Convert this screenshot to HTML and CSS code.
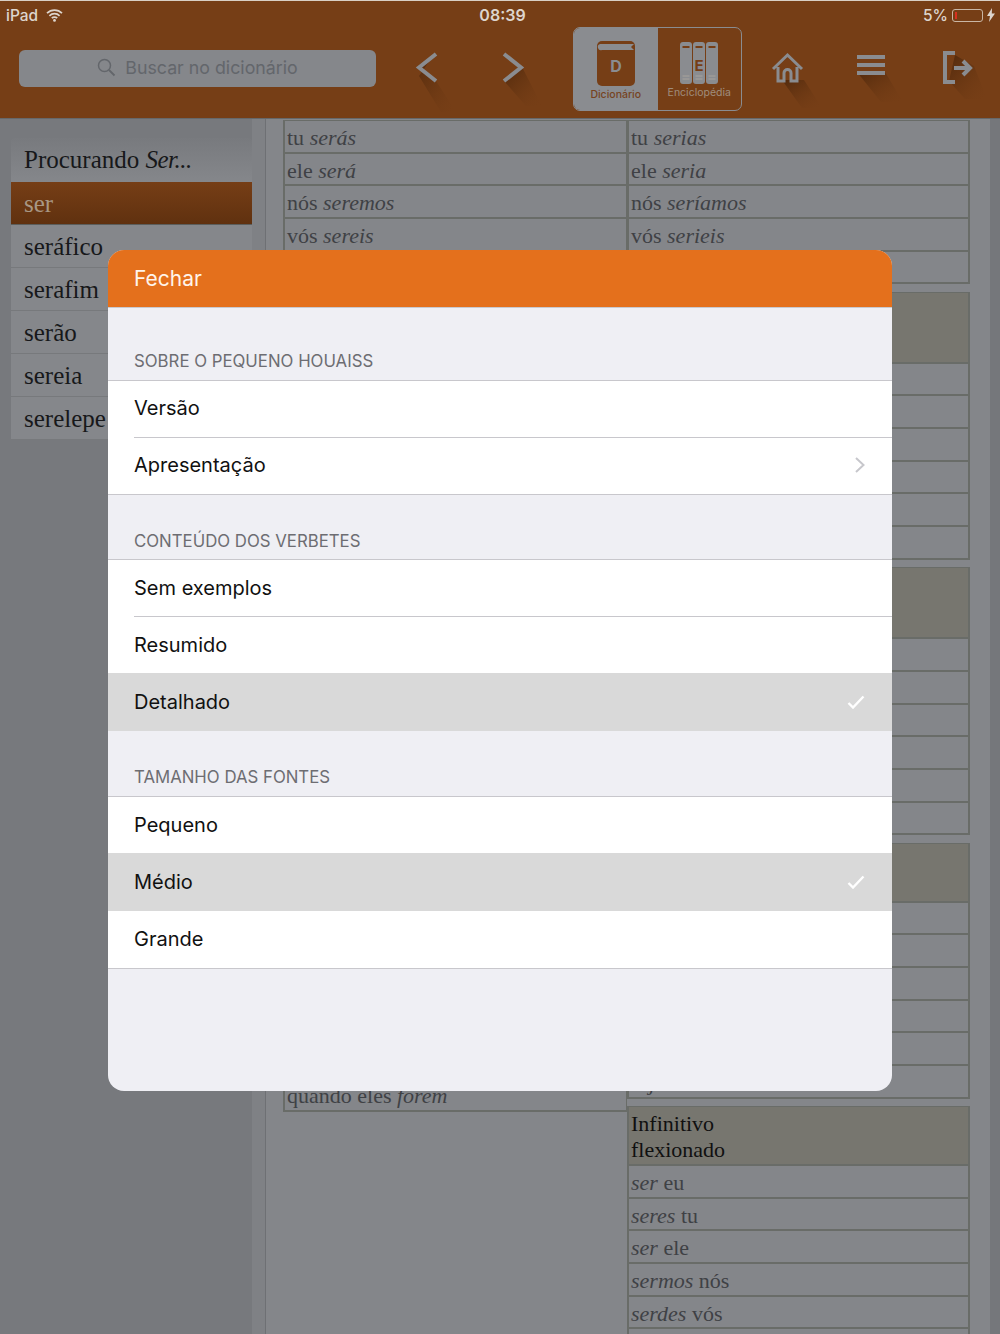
FILE: index.html
```html
<!DOCTYPE html>
<html lang="pt">
<head>
<meta charset="utf-8">
<title>Pequeno Houaiss</title>
<link rel="stylesheet" href="styles.css">
</head>
<body>
<div class="app">
  <svg class="defs" width="0" height="0" aria-hidden="true">
    <defs>
      <linearGradient id="sh" x1="0" y1="0" x2="1" y2="1">
        <stop offset="0" stop-color="#4f280c" stop-opacity=".95"/>
        <stop offset="1" stop-color="#763e16" stop-opacity="0"/>
      </linearGradient>
    </defs>
  </svg>
  <header class="top">
    <div class="status">
      <div class="st-left">
        <span>iPad</span>
        <svg class="wifi" width="17" height="13" viewBox="0 0 17 13"><path d="M1 4.200a10.600 10.600 0 0 1 15 0M3.400 6.800a7.200 7.200 0 0 1 10.200 0M5.800 9.200a3.800 3.800 0 0 1 5.400 0" fill="none" stroke="#ddd5cd" stroke-width="1.700"/><circle cx="8.500" cy="11.400" r="1.400" fill="#ddd5cd"/></svg>
      </div>
      <div class="st-time">08:39</div>
      <div class="st-right">
        <span>5%</span>
        <span class="batt"><span class="batt-level"></span></span>
        <svg width="8" height="14" viewBox="0 0 8 14"><path d="M5 0 0 8h3l-1 6 6-8.500H4.800z" fill="#ddd5cd"/></svg>
      </div>
    </div>
    <nav class="nav">
      <div class="search">
        <svg width="19" height="19" viewBox="0 0 19 19"><circle cx="7.500" cy="7.500" r="6" fill="none" stroke="#63666b" stroke-width="1.500"/><path d="m12 12 5.500 5.500" stroke="#63666b" stroke-width="1.800"/></svg>
        <span>Buscar no dicionário</span>
      </div>
      <svg class="ic ic-back" width="50" height="60" viewBox="0 0 50 60"><path d="M24 3 8 17.500 25 31l20 31H30L8 26z" fill="url(#sh)"/><path d="M25 4 8 17.500 25 31" fill="none" stroke="#8a8c90" stroke-width="4"/></svg>
      <svg class="ic ic-next" width="50" height="60" viewBox="0 0 50 60"><path d="M8 31 26 17 46 56 H30z" fill="url(#sh)"/><path d="M8 4l17 13.500L8 31" fill="none" stroke="#8a8c90" stroke-width="4"/></svg>
      <div class="seg">
        <div class="seg-item seg-on">
          <svg width="40" height="46" viewBox="0 0 40 46"><rect x="1" y="1" width="38" height="45" rx="5" fill="#763e16"/><path d="M4 4h34l-3 3 3 3H6a3 3 0 0 1-2-6z" fill="#8a8c90"/><text x="20" y="32" class="book-letter">D</text></svg>
          <span class="seg-label seg-label-on">Dicionário</span>
        </div>
        <div class="seg-item">
          <svg width="40" height="43" viewBox="0 0 40 43">
            <rect x="1" y="0" width="12" height="42" rx="3" fill="#8a8c90"/><rect x="14" y="0" width="12" height="42" rx="3" fill="#8a8c90"/><rect x="27" y="0" width="12" height="42" rx="3" fill="#8a8c90"/>
            <path d="M3.500 5h7M16.500 5h7M29.500 5h7" stroke="#763e16" stroke-width="2"/>
            <path d="M3.500 34h7M3.500 37h7M16.500 34h7M16.500 37h7M29.500 34h7M29.500 37h7" stroke="#a8a39c" stroke-width="1"/>
            <text x="20" y="29" class="book-letter small">E</text>
          </svg>
          <span class="seg-label">Enciclopédia</span>
        </div>
      </div>
      <svg class="ic ic-home" width="50" height="60" viewBox="0 0 50 60"><path d="M12 30h22l18 28H32z" fill="url(#sh)"/><path d="M3 19 17.500 5 32 19M8 17v14h6v-8a3.500 3.500 0 0 1 7 0v8h6V17" fill="none" stroke="#8a8c90" stroke-width="3"/></svg>
      <svg class="ic ic-menu" width="50" height="60" viewBox="0 0 50 60"><path d="M2 24h28l18 30H26z" fill="url(#sh)"/><path d="M2 9h28M2 17h28M2 25h28" stroke="#8a8c90" stroke-width="4"/></svg>
      <svg class="ic ic-exit" width="50" height="60" viewBox="0 0 50 60"><path d="M14 6 33 17 46 50H24L8 32z" fill="url(#sh)"/><path d="M14 4H4v29h10" fill="none" stroke="#8a8c90" stroke-width="4"/><path d="M13 19h16M22 12l7 7-7 7" fill="none" stroke="#8a8c90" stroke-width="4"/></svg>
    </nav>
  </header>

  <main class="body">
    <aside class="side">
      <div class="side-card">
        <div class="side-head">Procurando <i>Ser...</i></div>
        <div class="side-row side-sel">ser</div>
        <div class="side-row">seráfico</div>
        <div class="side-row">serafim</div>
        <div class="side-row">serão</div>
        <div class="side-row">sereia</div>
        <div class="side-row">serelepe</div>
      </div>
    </aside>
    <div class="strip"></div>
    <section class="content">
      <div class="col">
        <div class="tb">
          <div class="r">tu <i>serás</i></div>
          <div class="r">ele <i>será</i></div>
          <div class="r">nós <i>seremos</i></div>
          <div class="r">vós <i>sereis</i></div>
          <div class="r"></div>
        </div>
        <div class="tb">
          <div class="th th3"></div>
          <div class="r"></div><div class="r"></div><div class="r"></div><div class="r"></div><div class="r"></div><div class="r"></div>
        </div>
        <div class="tb">
          <div class="th th3"></div>
          <div class="r"></div><div class="r"></div><div class="r"></div><div class="r"></div><div class="r"></div><div class="r"></div>
        </div>
        <div class="tb">
          <div class="th th4"></div>
          <div class="r"></div><div class="r"></div><div class="r"></div><div class="r"></div><div class="r"></div>
          <div class="r">quando eles <i>forem</i></div>
        </div>
      </div>
      <div class="col">
        <div class="tb">
          <div class="r">tu <i>serias</i></div>
          <div class="r">ele <i>seria</i></div>
          <div class="r">nós <i>seríamos</i></div>
          <div class="r">vós <i>serieis</i></div>
          <div class="r"></div>
        </div>
        <div class="tb">
          <div class="th th3"></div>
          <div class="r"></div><div class="r"></div><div class="r"></div><div class="r"></div><div class="r"></div><div class="r"></div>
        </div>
        <div class="tb">
          <div class="th th3"></div>
          <div class="r"></div><div class="r"></div><div class="r"></div><div class="r"></div><div class="r"></div><div class="r"></div>
        </div>
        <div class="tb">
          <div class="th th2"></div>
          <div class="r"></div><div class="r"></div><div class="r"></div><div class="r"></div><div class="r"></div>
          <div class="r"><i>sejam</i></div>
        </div>
        <div class="tb">
          <div class="th th2b">Infinitivo<br>flexionado</div>
          <div class="r"><i>ser</i> eu</div>
          <div class="r"><i>seres</i> tu</div>
          <div class="r"><i>ser</i> ele</div>
          <div class="r"><i>sermos</i> nós</div>
          <div class="r"><i>serdes</i> vós</div>
          <div class="r"></div>
        </div>
      </div>
    </section>
    <div class="edge"></div>
  </main>

  <div class="modal">
    <div class="modal-head">Fechar</div>
    <div class="modal-body">
      <div class="sec sec-1">SOBRE O PEQUENO HOUAISS</div>
      <ul class="group group-1">
        <li class="item">Versão</li>
        <li class="item item-last">Apresentação
          <svg width="10" height="16" viewBox="0 0 10 16"><path d="M1 1l7.500 7L1 15" fill="none" stroke="#c7c7cc" stroke-width="2"/></svg>
        </li>
      </ul>
      <div class="sec">CONTEÚDO DOS VERBETES</div>
      <ul class="group group-open">
        <li class="item">Sem exemplos</li>
        <li class="item item-last">Resumido</li>
        <li class="item item-sel item-last">Detalhado
          <svg width="18" height="14" viewBox="0 0 18 14"><path d="M1.500 8l4.500 4.500L16.500 1.500" fill="none" stroke="#fff" stroke-width="2.400"/></svg>
        </li>
      </ul>
      <div class="sec sec-3">TAMANHO DAS FONTES</div>
      <ul class="group">
        <li class="item item-last">Pequeno</li>
        <li class="item item-sel item-last">Médio
          <svg width="18" height="14" viewBox="0 0 18 14"><path d="M1.500 8l4.500 4.500L16.500 1.500" fill="none" stroke="#fff" stroke-width="2.400"/></svg>
        </li>
        <li class="item item-last">Grande</li>
      </ul>
    </div>
  </div>
</div>
</body>
</html>
```

FILE: styles.css
```css
* { box-sizing: border-box; }
html, body { margin: 0; padding: 0; }
.app {
  position: relative;
  width: 1000px;
  height: 1334px;
  overflow: hidden;
  display: flex;
  flex-direction: column;
  background: #84868a;
  font-family: "Liberation Serif", serif;
}
.defs { position: absolute; }

/* top bar */
.top {
  height: 119px;
  flex: none;
  background: #763e16;
  border-top: 1px solid #d9cfc4;
  border-bottom: 1px solid #66686a;
  display: flex;
  flex-direction: column;
}
.status {
  height: 26px;
  flex: none;
  display: grid;
  grid-template-columns: 1fr auto 1fr;
  align-items: center;
  padding: 2px 5px 0 6px;
  font: 500 15.500px "Inter", sans-serif;
  color: #ddd5cd;
}
.st-left { display: flex; align-items: center; gap: 8px; }
.st-time { font-weight: 600; font-size: 16px; margin-left: 4px; }
.st-right { display: flex; align-items: center; justify-content: flex-end; gap: 4px; }
.batt {
  width: 31px;
  height: 13px;
  border: 1px solid #c9b6a4;
  border-radius: 3px;
  padding: 2px;
  display: block;
}
.batt-level { display: block; width: 2px; height: 100%; background: #d8301f; }

.nav {
  height: 84px;
  flex: none;
  display: flex;
  align-items: center;
  padding-left: 19px;
}
.search {
  width: 357px;
  height: 37px;
  margin-bottom: 2px;
  padding-bottom: 2px;
  background: #85878b;
  border-radius: 6px;
  display: flex;
  align-items: center;
  justify-content: center;
  gap: 9px;
  font: 400 17.800px "Inter", sans-serif;
  color: #63666b;
}
.ic { flex: none; overflow: visible; margin-top: 22px; }
.ic-back { margin-left: 35px; }
.ic-next { margin-left: 35px; }
.seg {
  margin-left: 27px;
  width: 169px;
  height: 84px;
  border: 1px solid #8a8c90;
  border-radius: 7px;
  display: flex;
  overflow: hidden;
  flex: none;
}
.seg-item {
  flex: 1;
  display: flex;
  flex-direction: column;
  align-items: center;
  padding-top: 14px;
  gap: 1px;
}
.seg-on { background: #8a8c90; padding-top: 12px; gap: 2px; }
.seg-label { font: 400 10.500px "Inter", sans-serif; color: #a08d7c; }
.seg-label-on { color: #76431f; font-weight: 500; }
.book-letter {
  font: 700 16px "Inter", sans-serif;
  fill: #8a8c90;
  text-anchor: middle;
}
.book-letter.small { fill: #763e16; font-size: 15px; }
.ic-home { margin-left: 28px; margin-top: 22px; }
.ic-menu { margin-left: 35px; margin-top: 18px; }
.ic-exit { margin-left: 36px; margin-top: 20px; }

/* page behind */
.body {
  flex: 1;
  min-height: 0;
  display: flex;
}
.side {
  width: 252px;
  flex: none;
  background: #77797d;
  padding: 19px 0 0 11px;
}
.side-card {
  border-radius: 4px 4px 0 0;
  overflow: hidden;
  color: #17181a;
  font-size: 25px;
}
.side-card i { letter-spacing: -0.500px; }
.side-head {
  height: 44px;
  padding-left: 13px;
  line-height: 43px;
  background: linear-gradient(#787a7e, #85878b);
}
.side-row {
  height: 43px;
  padding-left: 13px;
  line-height: 43px;
  background: #85878b;
  border-bottom: 1px solid #77797c;
}
.side-sel {
  color: #a89784;
  background: linear-gradient(#763e16, #60310f);
  border-bottom: 1px solid #5c5e5c;
}
.strip {
  width: 14px;
  flex: none;
  background: #7f8185;
  border-right: 1px solid #6e7074;
}
.content {
  flex: 1;
  min-width: 0;
  display: grid;
  grid-template-columns: 344px 343px;
  padding: 1px 0 0 17px;
  align-content: start;
}
.edge { width: 10px; flex: none; background: #75777b; }
.col { display: flex; flex-direction: column; min-width: 0; }
.tb {
  border: solid #696c68;
  border-width: 1px 2px 0 2px;
  margin-bottom: 7.500px;
  font-size: 22px;
  color: #3f4145;
}
.col:first-child .tb { border-right-width: 1px; }
.r {
  height: 32.670px;
  line-height: 33px;
  padding-left: 2px;
  border-bottom: 2px solid #696c68;
  white-space: nowrap;
  overflow: hidden;
}
.th {
  background: #77766f;
  color: #101010;
  padding: 4px 0 0 2px;
  line-height: 26px;
  border-bottom: 2px solid #696c68;
}
.th3 { height: 71px; }
.th4 { height: 72px; }
.th2 { height: 59px; }
.th2b { height: 59px; }

/* modal */
.modal {
  position: absolute;
  left: 108px;
  top: 250px;
  width: 784px;
  height: 841px;
  border-radius: 16px;
  overflow: hidden;
  background: #efeff4;
  display: flex;
  flex-direction: column;
  font-family: "Inter", sans-serif;
}
.modal-head {
  height: 58px;
  flex: none;
  padding-left: 26px;
  line-height: 57px;
  background: #e4701c;
  border-bottom: 1px solid #c9c9cf;
  color: #fff4ea;
  font-size: 21px;
}
.modal-body { flex: 1; }
.sec {
  height: 64px;
  padding: 36px 0 0 26px;
  font-size: 16.800px;
  line-height: 20px;
  color: #6d6d72;
}
.sec-1 { height: 72px; padding-top: 43px; }
.sec-3 { height: 65px; }
.group {
  list-style: none;
  margin: 0;
  padding: 0;
  background: #fff;
  border-top: 1px solid #c8c7cc;
  border-bottom: 1px solid #c8c7cc;
}
.group-open { border-bottom: 0; }
.item {
  position: relative;
  height: 57px;
  padding: 0 27px 2px 26px;
  display: flex;
  align-items: center;
  justify-content: space-between;
  font-size: 20px;
  color: #111;
}
.group-1 .item { height: 56.500px; }
.item::after {
  content: "";
  position: absolute;
  left: 26px;
  right: 0;
  bottom: 0;
  height: 1px;
  background: #c8c7cc;
}
.item-last::after { display: none; }
.item-sel { background: #d9d9d9; margin-top: -1px; height: 58px; padding-bottom: 0; }
```
